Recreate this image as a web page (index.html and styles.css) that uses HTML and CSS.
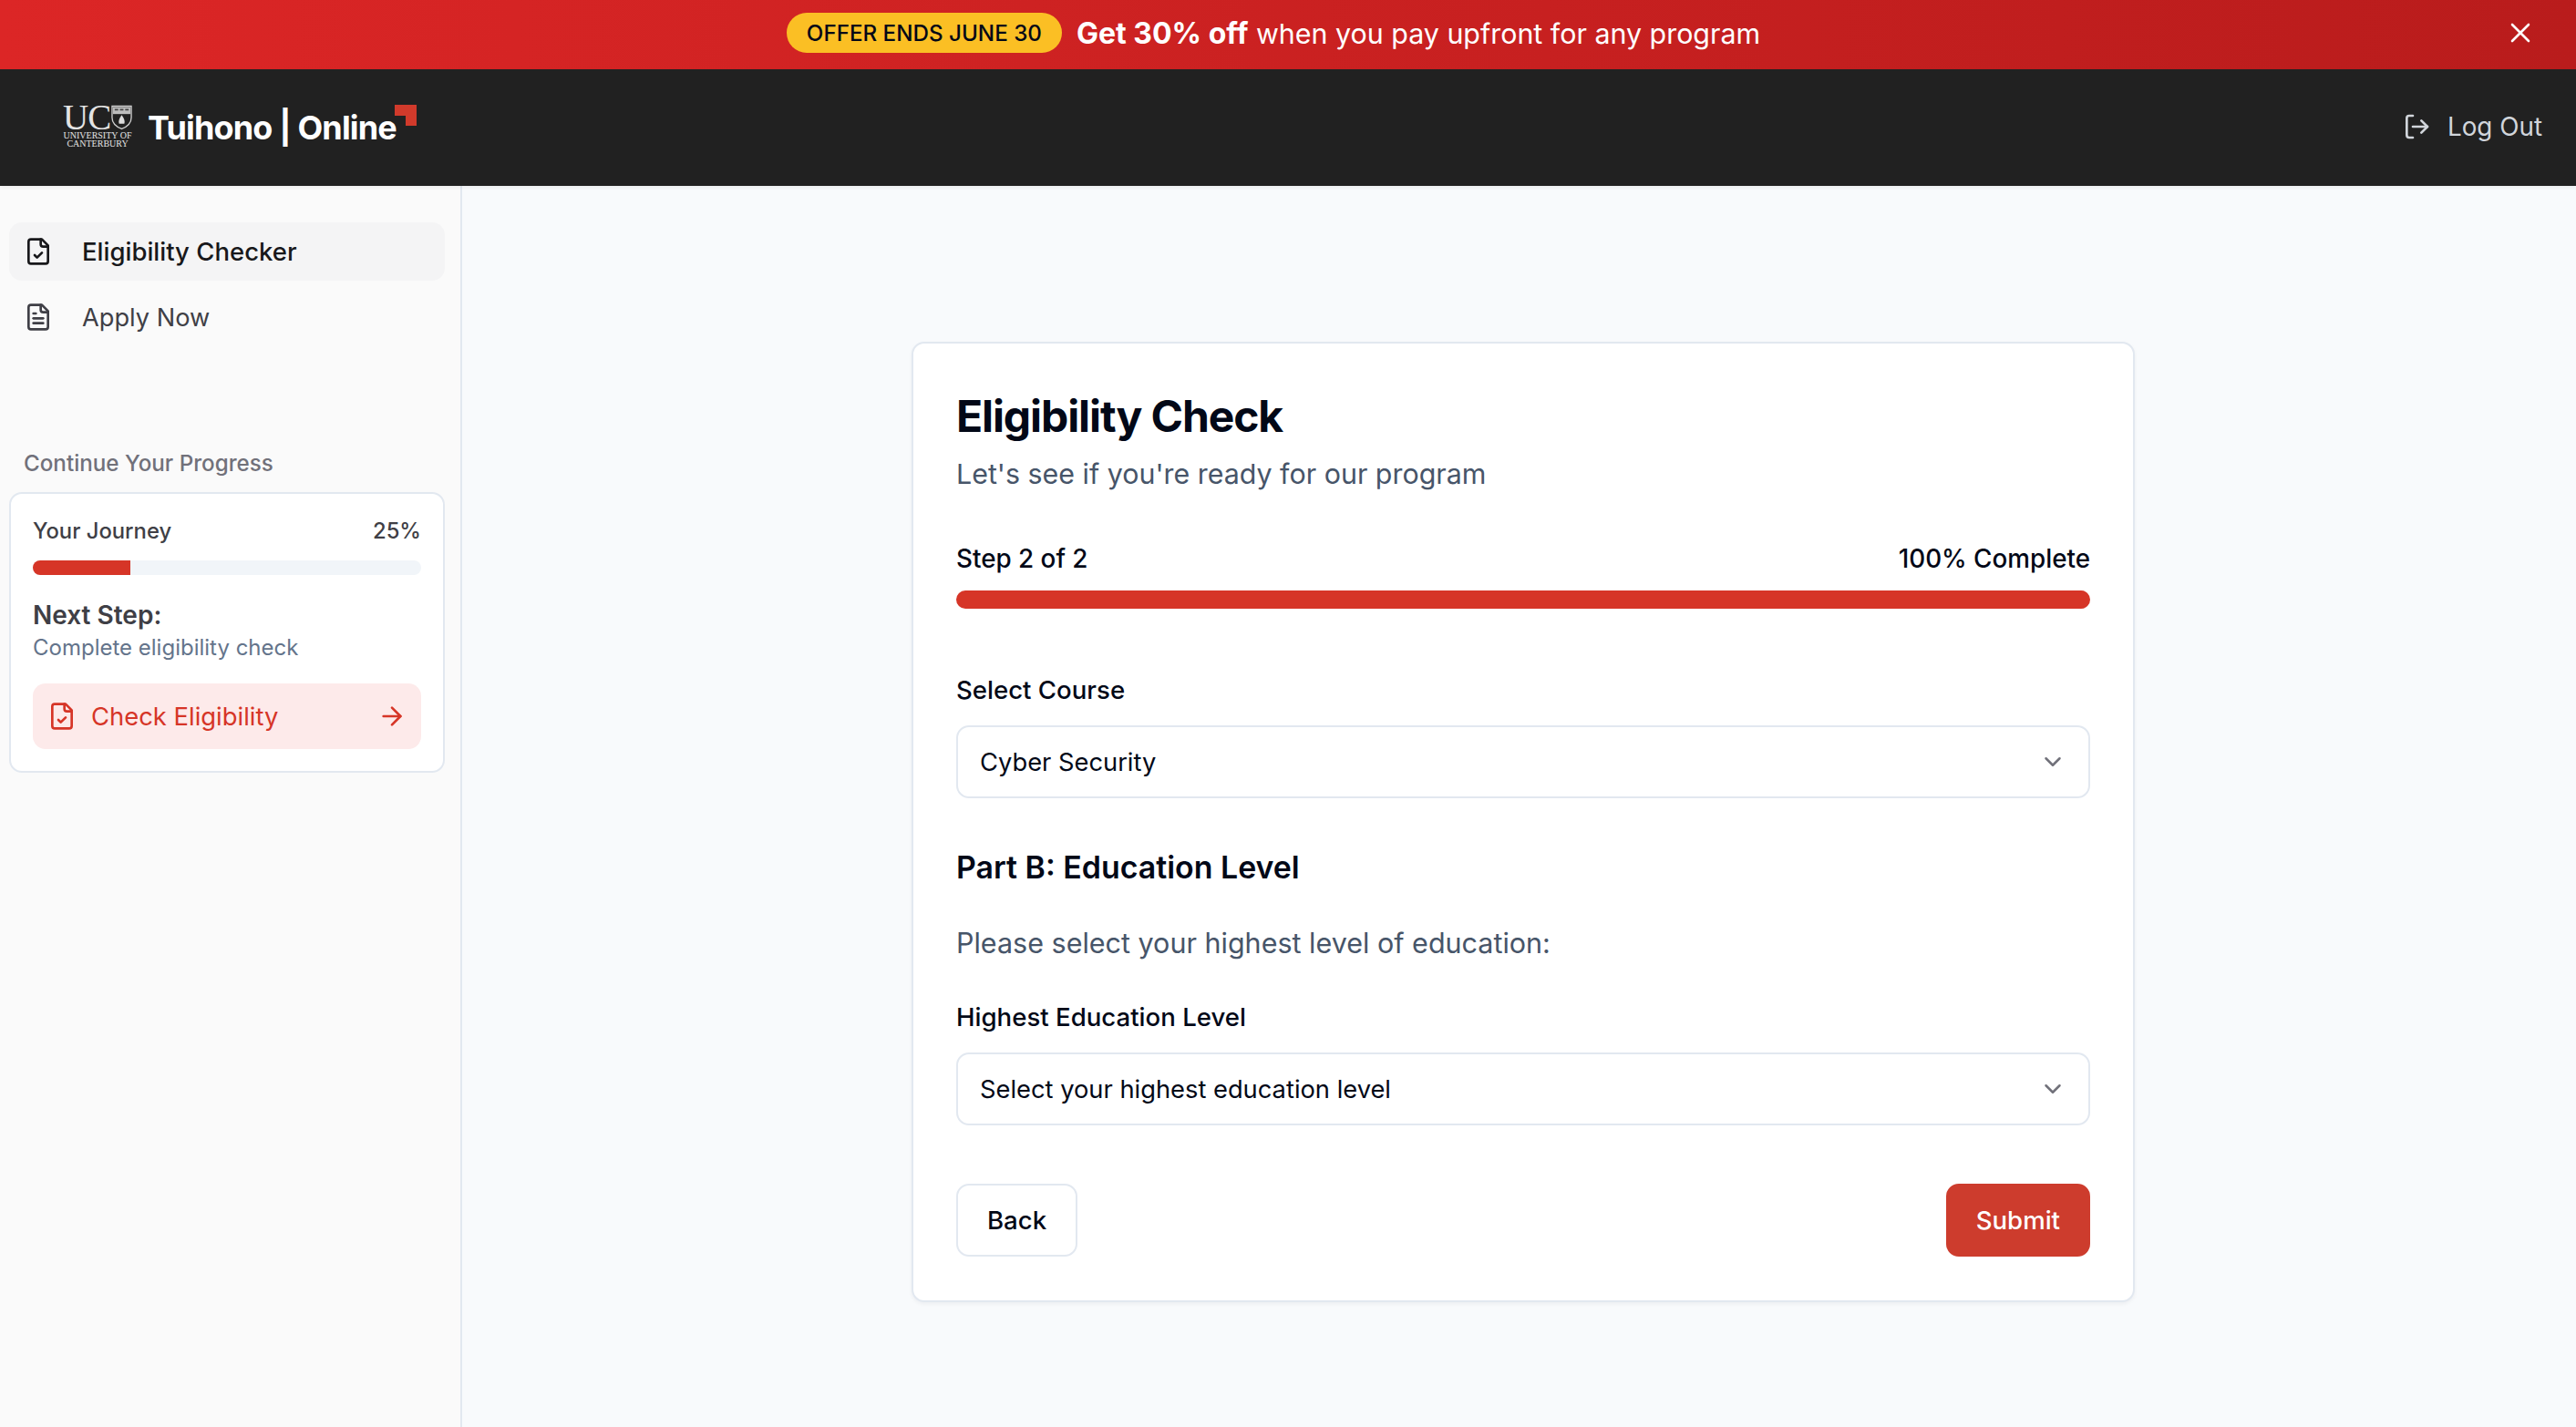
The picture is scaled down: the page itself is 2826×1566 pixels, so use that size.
FILE: index.html
```html
<!DOCTYPE html>
<html lang="en">
<head>
    <meta charset="UTF-8">
    <meta name="viewport" content="width=device-width, initial-scale=1.0">
    <link rel="stylesheet" href="styles.css">
    <title>Tuihono Online</title>
</head>
<body>
    <div class="promo">
        <span class="promo-pill">OFFER ENDS JUNE 30</span>
        <span class="promo-text"><b>Get 30% off</b> when you pay upfront for any program</span>
        <svg class="promo-close" viewBox="0 0 24 24"><path d="M3 3l18 18M21 3L3 21"/></svg>
    </div>

    <header class="topbar">
        <div class="logo">
            <div class="uc">
                <div class="uc-top">
                    <span class="uc-letters">UC</span>
                    <svg class="uc-shield" viewBox="0 0 24 28">
                        <path class="shield-out" d="M1 1h22v13c0 7-6 11-11 13C7 25 1 21 1 14z"/>
                        <path class="shield-head" d="M2 2h20v8H2z"/>
                        <path class="shield-line" d="M4 4h4v2H4zM10 4h4v2h-4zM16 4h4v2h-4z"/>
                        <path class="shield-mark" d="M12 11c3 4 4 7 3 10h-6c-1-3 0-6 3-10z"/>
                    </svg>
                </div>
                <div class="uc-name">UNIVERSITY OF<br>CANTERBURY</div>
            </div>
            <span class="wordmark">Tuihono | Online</span>
            <svg class="corner" viewBox="0 0 24 23"><path d="M0 0h24v23H12V12H0z"/></svg>
        </div>
        <a class="logout">
            <svg class="icon" viewBox="0 0 24 24"><path d="M9 21H6a2 2 0 0 1-2-2V5a2 2 0 0 1 2-2h3"/><path d="m16 17 5-5-5-5"/><path d="M21 12H9"/></svg>
            Log Out
        </a>
    </header>

    <div class="layout">
        <aside class="sidebar">
            <nav class="nav">
                <a class="nav-item active">
                    <svg class="icon" viewBox="0 0 24 24"><path d="M15 2H6a2 2 0 0 0-2 2v16a2 2 0 0 0 2 2h12a2 2 0 0 0 2-2V7Z"/><path d="M14 2v4a2 2 0 0 0 2 2h4"/><path d="m9 15 2 2 4-4"/></svg>
                    Eligibility Checker
                </a>
                <a class="nav-item">
                    <svg class="icon" viewBox="0 0 24 24"><path d="M15 2H6a2 2 0 0 0-2 2v16a2 2 0 0 0 2 2h12a2 2 0 0 0 2-2V7Z"/><path d="M14 2v4a2 2 0 0 0 2 2h4"/><path d="M10 9H8"/><path d="M16 13H8"/><path d="M16 17H8"/></svg>
                    Apply Now
                </a>
            </nav>

            <p class="side-title">Continue Your Progress</p>
            <div class="journey">
                <div class="journey-head"><span>Your Journey</span><span>25%</span></div>
                <div class="track small"><div class="fill" style="width: 25%"></div></div>
                <p class="next-label">Next Step:</p>
                <p class="next-text">Complete eligibility check</p>
                <a class="next-btn">
                    <svg class="icon" viewBox="0 0 24 24"><path d="M15 2H6a2 2 0 0 0-2 2v16a2 2 0 0 0 2 2h12a2 2 0 0 0 2-2V7Z"/><path d="M14 2v4a2 2 0 0 0 2 2h4"/><path d="m9 15 2 2 4-4"/></svg>
                    <span class="next-btn-text">Check Eligibility</span>
                    <svg class="icon" viewBox="0 0 24 24"><path d="M5 12h14"/><path d="m12 5 7 7-7 7"/></svg>
                </a>
            </div>
        </aside>

        <main class="main">
            <section class="card">
                <h1 class="card-title">Eligibility Check</h1>
                <p class="card-sub">Let's see if you're ready for our program</p>

                <div class="step-row"><span>Step 2 of 2</span><span>100% Complete</span></div>
                <div class="track big"><div class="fill" style="width: 100%"></div></div>

                <label class="field-label first">Select Course</label>
                <div class="select">
                    <span>Cyber Security</span>
                    <svg class="chevron" viewBox="0 0 24 24"><path d="m6 9 6 6 6-6"/></svg>
                </div>

                <h2 class="part-title">Part B: Education Level</h2>
                <p class="part-text">Please select your highest level of education:</p>

                <label class="field-label">Highest Education Level</label>
                <div class="select">
                    <span>Select your highest education level</span>
                    <svg class="chevron" viewBox="0 0 24 24"><path d="m6 9 6 6 6-6"/></svg>
                </div>

                <div class="actions">
                    <button class="btn btn-back">Back</button>
                    <button class="btn btn-submit">Submit</button>
                </div>
            </section>
        </main>
    </div>
</body>
</html>
```

FILE: styles.css
```css
* {
    box-sizing: border-box;
    margin: 0;
}

body {
    height: 1566px;
    overflow: hidden;
    display: flex;
    flex-direction: column;
    font-family: "Inter", "Liberation Sans", sans-serif;
    color: #020817;
    background: #f8fafc;
}

.icon {
    width: 32px;
    height: 32px;
    flex: none;
    fill: none;
    stroke: currentColor;
    stroke-width: 2;
    stroke-linecap: round;
    stroke-linejoin: round;
}

/* promo banner */
.promo {
    height: 76px;
    flex: none;
    position: relative;
    display: flex;
    align-items: center;
    justify-content: center;
    gap: 16px;
    padding: 0 32px 4px 0;
    color: #fff;
    background: linear-gradient(90deg, #dc2626, #b91c1c);
}

.promo-pill {
    height: 44px;
    padding: 0 22px;
    display: flex;
    align-items: center;
    font-size: 24.2px;
    font-weight: 500;
    color: #020817;
    background: #fbbf24;
    border-radius: 22px;
}

.promo-text {
    font-size: 30.4px;
}

.promo-text b {
    font-size: 32px;
    font-weight: 700;
}

.promo-close {
    position: absolute;
    right: 49px;
    top: 24px;
    width: 24px;
    height: 24px;
    fill: none;
    stroke: #fff;
    stroke-width: 2.6;
    stroke-linecap: round;
}

/* top bar */
.topbar {
    height: 128px;
    flex: none;
    display: flex;
    align-items: center;
    justify-content: space-between;
    padding: 0 37px 2px 69px;
    background: #212121;
    position: relative;
    box-shadow: 0 2px 4px rgba(0, 0, 0, 0.06);
}

.logo {
    display: flex;
    align-items: flex-start;
}

.uc {
    width: 76px;
    color: #e4e4e4;
    font-family: "Liberation Serif", serif;
}

.uc-top {
    display: flex;
    align-items: flex-start;
    justify-content: space-between;
    height: 28px;
}

.uc-letters {
    font-size: 39px;
    line-height: 28px;
    letter-spacing: -1px;
}

.uc-shield {
    width: 23px;
    height: 28px;
}

.shield-out {
    fill: #212121;
    stroke: #cfcfcf;
    stroke-width: 1.4;
}

.shield-head {
    fill: #bdbdbd;
}

.shield-line {
    fill: #444;
}

.shield-mark {
    fill: #dcdcdc;
}

.uc-name {
    margin-top: 2px;
    font-size: 10px;
    line-height: 8.6px;
    text-align: center;
    white-space: nowrap;
}

.wordmark {
    margin: 5px 0 0 17px;
    font-size: 36px;
    line-height: 40px;
    font-weight: 700;
    letter-spacing: -0.85px;
    color: #fff;
    white-space: nowrap;
}

.corner {
    width: 24px;
    height: 23px;
    margin-left: -2px;
    fill: #d13a2b;
}

.logout {
    display: flex;
    align-items: center;
    gap: 18px;
    font-size: 27.8px;
    color: #d1d5db;
}

/* sidebar */
.layout {
    flex: 1;
    display: flex;
    min-height: 0;
}

.sidebar {
    width: 507px;
    flex: none;
    padding: 40px 17px 0 10px;
    background: #fafafa;
    border-right: 2px solid #e2e8f0;
}

.nav {
    display: flex;
    flex-direction: column;
    gap: 8px;
}

.nav-item {
    height: 64px;
    display: flex;
    align-items: center;
    gap: 32px;
    padding-left: 16px;
    font-size: 27.2px;
    color: #3f3f46;
    border-radius: 14px;
}

.nav-item.active {
    font-size: 27.5px;
    color: #18181b;
    font-weight: 500;
    background: #f4f4f5;
}

.side-title {
    margin: 111px 0 0 16px;
    font-size: 24.2px;
    line-height: 36px;
    font-weight: 500;
    color: #71717a;
}

.journey {
    margin-top: 13px;
    height: 308px;
    padding: 23px 24px 0;
    background: #fff;
    border: 2px solid #e2e8f0;
    border-radius: 14px;
}

.journey-head {
    display: flex;
    justify-content: space-between;
    font-size: 23.8px;
    line-height: 36px;
    font-weight: 500;
    color: #3f3f46;
}

.track {
    background: #f1f5f9;
    border-radius: 10px;
    overflow: hidden;
}

.fill {
    height: 100%;
    background: #d63527;
}

.track.small {
    height: 16px;
    margin-top: 14px;
}

.next-label {
    margin-top: 26px;
    font-size: 28px;
    line-height: 36px;
    font-weight: 600;
    color: #3f3f46;
}

.next-text {
    font-size: 24px;
    line-height: 36px;
    color: #64748b;
}

.next-btn {
    margin-top: 21px;
    height: 72px;
    display: flex;
    align-items: center;
    gap: 16px;
    padding: 0 16px;
    font-size: 27.4px;
    color: #d63527;
    background: #fdeaea;
    border-radius: 14px;
}

.next-btn-text {
    flex: 1;
}

/* main card */
.main {
    flex: 1;
    display: flex;
    justify-content: center;
    align-items: flex-start;
    padding: 171px 0 0 9px;
}

.card {
    width: 1342px;
    height: 1054px;
    padding: 48px 47px 0;
    background: #fff;
    border: 2px solid #e2e8f0;
    border-radius: 14px;
    box-shadow: 0 2px 4px rgba(15, 23, 42, 0.05);
}

.card-title {
    font-size: 48px;
    line-height: 64px;
    font-weight: 700;
    letter-spacing: -1.1px;
}

.card-sub {
    margin-top: 11px;
    font-size: 30.4px;
    line-height: 40px;
    color: #475569;
}

.step-row {
    margin-top: 53px;
    display: flex;
    justify-content: space-between;
    font-size: 27.8px;
    line-height: 40px;
    font-weight: 500;
}

.track.big {
    height: 20px;
    margin-top: 15px;
}

.field-label {
    display: block;
    margin-top: 41px;
    font-size: 27.6px;
    line-height: 40px;
    font-weight: 500;
}

.field-label.first {
    margin-top: 69px;
}

.select {
    height: 80px;
    margin-top: 19px;
    display: flex;
    align-items: center;
    justify-content: space-between;
    padding: 0 24px;
    font-size: 27.3px;
    background: #fff;
    border: 2px solid #e2e8f0;
    border-radius: 14px;
}

.chevron {
    width: 30px;
    height: 30px;
    fill: none;
    stroke: #71717a;
    stroke-width: 2;
    stroke-linecap: round;
    stroke-linejoin: round;
}

.part-title {
    margin-top: 52px;
    font-size: 33.9px;
    line-height: 48px;
    font-weight: 600;
}

.part-text {
    margin-top: 39px;
    font-size: 30.5px;
    line-height: 40px;
    color: #475569;
}

.actions {
    margin-top: 64px;
    display: flex;
    justify-content: space-between;
}

.btn {
    height: 80px;
    padding: 0 32px;
    font-family: inherit;
    font-size: 27.6px;
    font-weight: 500;
    border-radius: 14px;
}

.btn-back {
    color: #020817;
    background: #fff;
    border: 2px solid #e2e8f0;
}

.btn-submit {
    padding: 0 33px;
    color: #fff;
    background: #cd3c2d;
    border: none;
}
```
